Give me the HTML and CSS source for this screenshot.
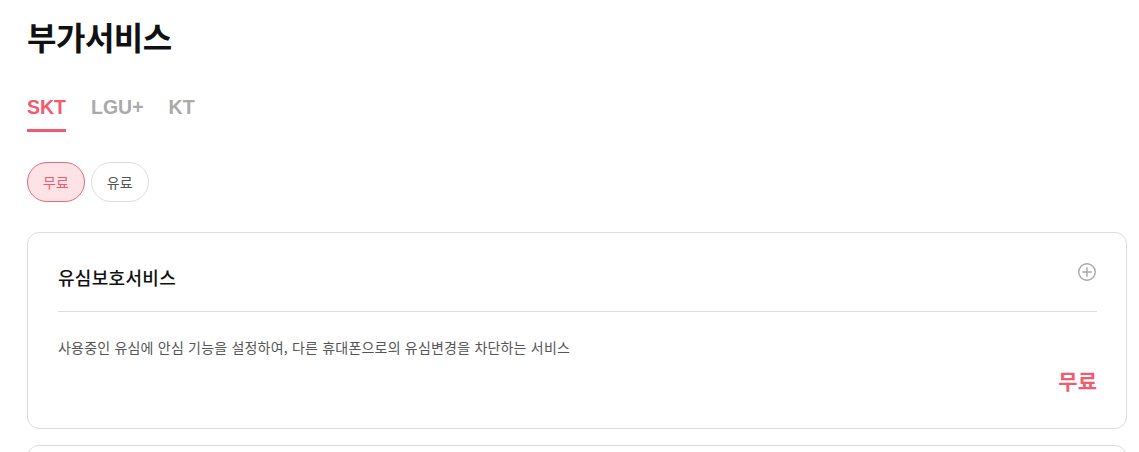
FILE: index.html
```html
<!DOCTYPE html>
<html lang="ko">
<head>
    <meta charset="UTF-8">
    <meta name="viewport" content="width=device-width, initial-scale=1.0">
    <title>부가서비스</title>
    <link rel="stylesheet" href="styles.css">
</head>
<body>
    <div class="page">
        <h1>부가서비스</h1>

        <div class="tabs">
            <button class="tab active">SKT</button>
            <button class="tab">LGU+</button>
            <button class="tab">KT</button>
        </div>

        <div class="chips">
            <button class="chip active">무료</button>
            <button class="chip">유료</button>
        </div>

        <div class="card">
            <div class="card-head">
                <h2>유심보호서비스</h2>
                <svg class="plus" width="20" height="20" viewBox="0 0 20 20" fill="none" stroke="#a8a8a8" stroke-width="1.4">
                    <circle cx="10" cy="10" r="8.3"/>
                    <path d="M10 5.8v8.4M5.8 10h8.4" stroke-linecap="round"/>
                </svg>
            </div>
            <p class="desc">사용중인 유심에 안심 기능을 설정하여, 다른 휴대폰으로의 유심변경을 차단하는 서비스</p>
            <div class="price">무료</div>
        </div>

        <div class="card"></div>
    </div>
</body>
</html>
```

FILE: styles.css
```css
body {
    margin: 0;
    font-family: "Noto Sans CJK KR", sans-serif;
    color: #111;
    background: #fff;
}

.page {
    padding: 14px 12px 0 27px;
}

h1 {
    font-size: 32px;
    font-weight: 700;
    margin: 0;
    line-height: 44px;
    letter-spacing: -0.5px;
}

.tabs {
    display: flex;
    gap: 25px;
    margin-top: 38px;
}

.tab {
    font-family: "Liberation Sans", Arial, sans-serif;
    font-size: 19.5px;
    font-weight: 700;
    color: #aaa;
    background: none;
    border: none;
    padding: 0 0 11px;
    border-bottom: 3px solid transparent;
    line-height: 22px;
    cursor: pointer;
}

.tab.active {
    color: #f25a70;
    border-bottom-color: #f25a70;
}

.chips {
    display: flex;
    gap: 6px;
    margin-top: 30px;
}

.chip {
    font-family: inherit;
    font-size: 14px;
    height: 40px;
    padding: 0 15px;
    border-radius: 20px;
    border: 1px solid #ddd;
    background: #fff;
    color: #555;
    cursor: pointer;
}

.chip.active {
    background: #fde3e6;
    border-color: #f0637a;
    color: #f25a70;
}

.card {
    margin-top: 30px;
    border: 1px solid #ddd;
    border-radius: 12px;
    padding: 29px 29px 33px 30px;
}

.card + .card {
    margin-top: 16px;
    height: 40px;
}

.card-head {
    display: flex;
    justify-content: space-between;
    align-items: center;
    padding-bottom: 19px;
    border-bottom: 1px solid #ddd;
}

.card-head h2 {
    font-size: 18px;
    font-weight: 500;
    margin: 0;
    line-height: 30px;
    letter-spacing: 0.3px;
}

.plus {
    margin-top: -10px;
}

.desc {
    margin: 24px 0 0;
    font-size: 14px;
    line-height: 22px;
    color: #555;
    letter-spacing: 0.2px;
}

.price {
    text-align: right;
    font-size: 21px;
    font-weight: 700;
    color: #f25a70;
    line-height: 30px;
    margin-top: 7px;
}
```
